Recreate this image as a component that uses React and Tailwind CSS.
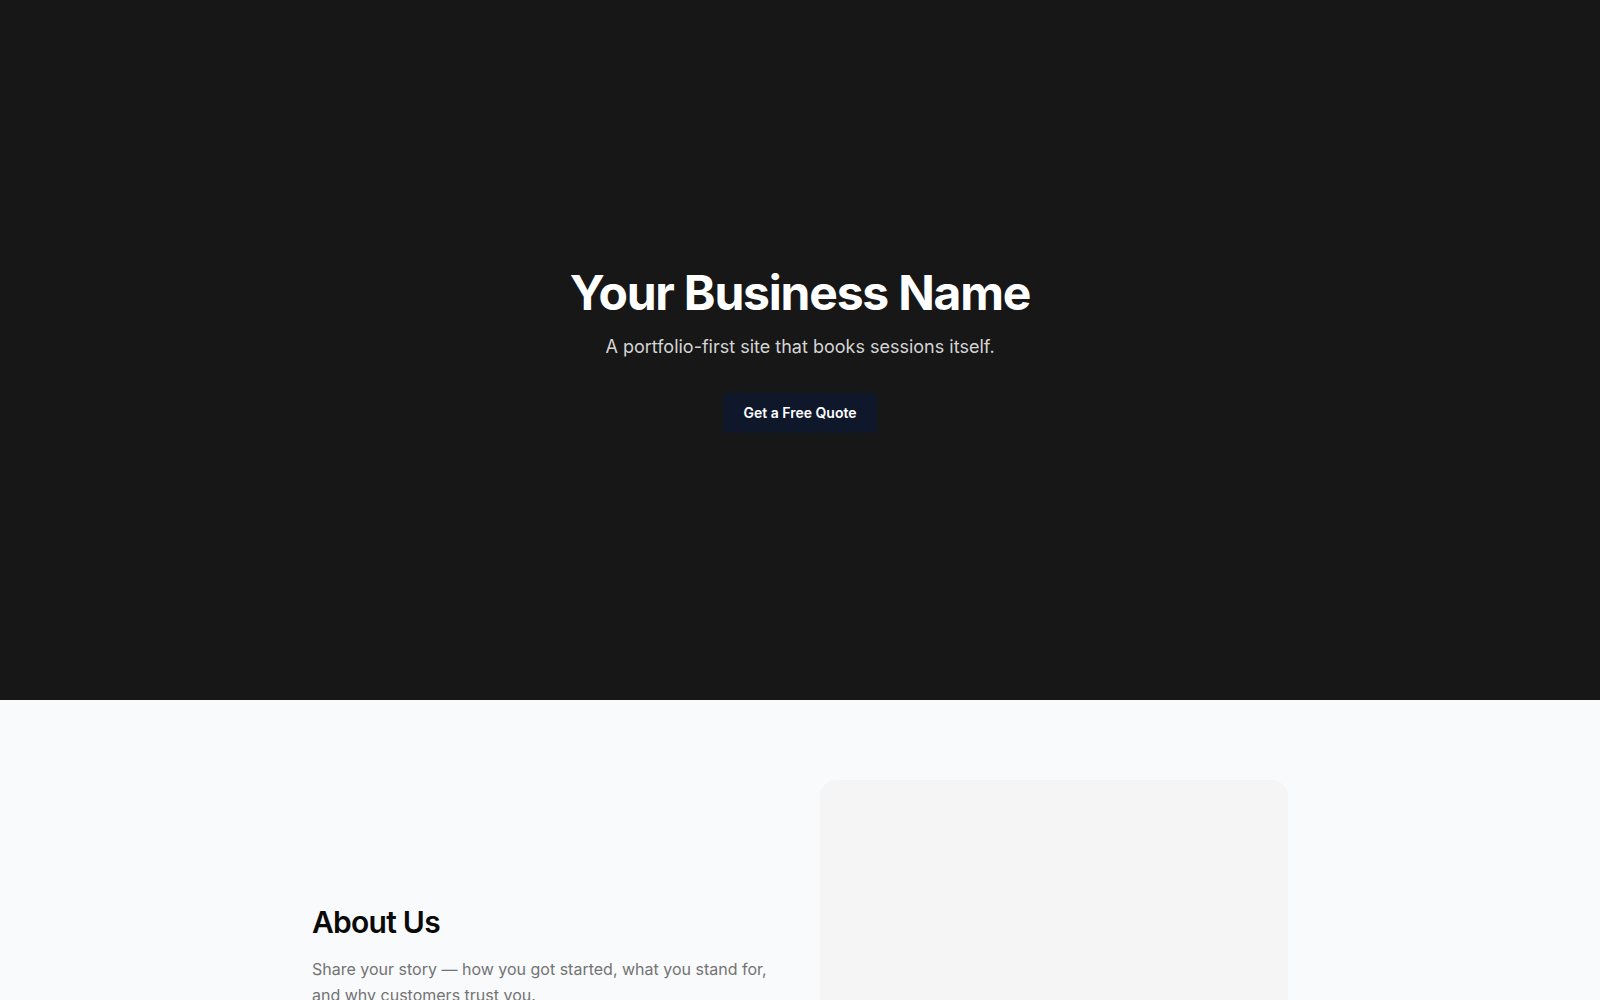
import React from 'react';

const App = () => {
  return (
    <div className="min-h-screen bg-slate-50" style={{ fontFamily: 'Inter, "Noto Sans", sans-serif' }}>
      {/* Hero */}
      <section className="min-h-[70vh] bg-neutral-900 flex items-center justify-center">
        <div className="text-center px-6 pb-1">
          <h1 className="text-5xl leading-tight font-bold tracking-tight text-white">
            Your Business Name
          </h1>
          <p className="mt-2.5 text-lg text-neutral-300">
            A portfolio-first site that books sessions itself.
          </p>
          <button className="mt-8 px-5 py-2.5 bg-slate-900 text-white text-sm font-semibold rounded-sm">
            Get a Free Quote
          </button>
        </div>
      </section>

      {/* About */}
      <section className="py-20">
        <div className="max-w-5xl mx-auto px-6 grid grid-cols-2 gap-10 items-center">
          <div>
            <h2 className="text-3xl font-semibold tracking-tight text-neutral-950">About Us</h2>
            <p className="mt-4 text-base leading-relaxed text-neutral-500">
              Share your story — how you got started, what you stand for, and why customers trust you.
            </p>
          </div>
          <div className="aspect-[4/3] rounded-2xl bg-neutral-100" />
        </div>
      </section>
    </div>
  );
};

export default App;
